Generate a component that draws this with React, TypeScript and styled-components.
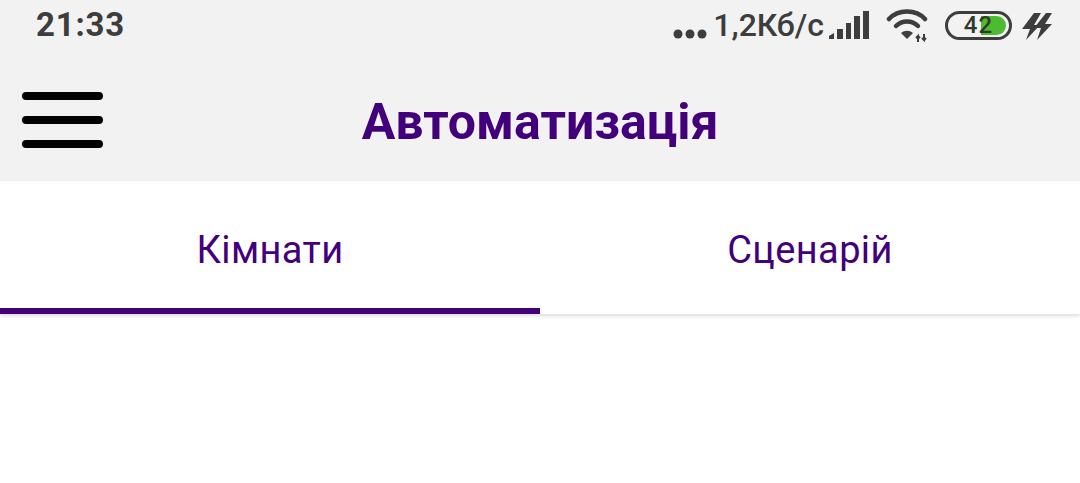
import React from "react";
import styled, { createGlobalStyle } from "styled-components";

const GlobalStyle = createGlobalStyle`
  html, body {
    margin: 0;
    padding: 0;
    background: #ffffff;
    font-family: Roboto, "Liberation Sans", sans-serif;
  }
`;

const Page = styled.div`
  width: 1080px;
  height: 483px;
  overflow: hidden;
  background: #ffffff;
`;

const Header = styled.header`
  height: 181px;
  background: #f2f2f2;
  display: flex;
  flex-direction: column;
`;

const StatusBar = styled.div`
  height: 50px;
  display: flex;
  align-items: center;
  justify-content: space-between;
  padding: 0 28px 0 36px;
  color: #3d3d3d;
`;

const Time = styled.span`
  font-size: 33px;
  font-weight: 700;
  letter-spacing: 0.8px;
  line-height: 50px;
`;

const StatusIcons = styled.div`
  display: flex;
  align-items: center;
`;

const Speed = styled.span`
  font-size: 32px;
  font-weight: 500;
  line-height: 50px;
  margin: 0 5px 0 6px;
`;

const Battery = styled.div`
  position: relative;
  width: 67px;
  height: 29px;
  margin: 0 10px 0 15px;
  box-sizing: border-box;
  border: 3px solid #3d3d3d;
  border-radius: 15px;
  display: flex;
  align-items: center;
  justify-content: center;
  overflow: hidden;
`;

const BatteryFill = styled.div`
  position: absolute;
  top: 2px;
  bottom: 2px;
  right: 3px;
  width: 25px;
  background: #4dbb30;
  border-radius: 0 10px 10px 0;
`;

const BatteryLabel = styled.span`
  position: relative;
  font-size: 24px;
  font-weight: 500;
  line-height: 22px;
  letter-spacing: 1px;
  color: #2f3a2c;
`;

const Toolbar = styled.div`
  flex: 1;
  position: relative;
  display: flex;
  align-items: center;
  justify-content: center;
  padding-top: 13px;
`;

const Menu = styled.button`
  position: absolute;
  left: 22px;
  top: 42px;
  width: 81px;
  padding: 0;
  border: 0;
  background: transparent;
  display: flex;
  flex-direction: column;
  gap: 16px;
`;

const MenuLine = styled.span`
  display: block;
  height: 8px;
  border-radius: 4px;
  background: #000000;
`;

const Title = styled.h1`
  margin: 0;
  font-size: 50px;
  font-weight: 700;
  line-height: 60px;
  color: #42007a;
`;

const Tabs = styled.nav`
  height: 133px;
  display: grid;
  grid-template-columns: 1fr 1fr;
  box-shadow: 0 2px 4px rgba(0, 0, 0, 0.14);
  background: #ffffff;
`;

const Tab = styled.div<{ $active?: boolean }>`
  display: flex;
  align-items: center;
  justify-content: center;
  box-sizing: border-box;
  padding-top: 11px;
  font-size: 38px;
  letter-spacing: 0.4px;
  color: #42007a;
  border-bottom: 6px solid ${(props) => (props.$active ? "#42007a" : "transparent")};
`;

const Dots = () => (
  <svg width="34" height="12" viewBox="0 0 34 12" style={{ marginTop: 18 }}>
    <circle cx="5" cy="6" r="4.5" fill="#3d3d3d" />
    <circle cx="17" cy="6" r="4.5" fill="#3d3d3d" />
    <circle cx="29" cy="6" r="4.5" fill="#3d3d3d" />
  </svg>
);

const Signal = () => (
  <svg width="41" height="30" viewBox="0 0 41 30">
    <path d="M0 29v-3l5-3v6z" fill="#3d3d3d" />
    <rect x="8" y="19" width="6" height="10" fill="#3d3d3d" />
    <rect x="17" y="13" width="5" height="16" fill="#3d3d3d" />
    <rect x="25" y="6" width="6" height="23" fill="#3d3d3d" />
    <rect x="34" y="1" width="6" height="28" fill="#3d3d3d" />
  </svg>
);

const Wifi = () => (
  <svg width="44" height="34" viewBox="0 0 44 34" style={{ marginLeft: 16 }}>
    <g fill="none" stroke="#3d3d3d" strokeWidth="4.5" strokeLinecap="round">
      <path d="M3 11C12 1 30 1 39 11" />
      <path d="M10 18c6-6 16-6 22 0" />
    </g>
    <path d="M15 25c4-3 8-3 12 0l-6 6z" fill="#3d3d3d" />
    <path
      d="M32 34v-6l-2 2M32 28l2 2M38 26v6l-2-2M38 32l2-2"
      fill="none"
      stroke="#3d3d3d"
      strokeWidth="2"
    />
  </svg>
);

const Bolts = () => (
  <svg width="30" height="30" viewBox="0 0 30 30">
    <path d="M12 3L0 19h8L4 30l14-15h-6l7-12z" fill="#3d3d3d" />
    <path d="M24 3L12 18h7l-4 12 15-16h-7l7-11z" fill="#3d3d3d" />
  </svg>
);

export default function App() {
  return (
    <Page>
      <GlobalStyle />
      <Header>
        <StatusBar>
          <Time>21:33</Time>
          <StatusIcons>
            <Dots />
            <Speed>1,2Кб/с</Speed>
            <Signal />
            <Wifi />
            <Battery>
              <BatteryFill />
              <BatteryLabel>42</BatteryLabel>
            </Battery>
            <Bolts />
          </StatusIcons>
        </StatusBar>
        <Toolbar>
          <Menu aria-label="Меню">
            <MenuLine />
            <MenuLine />
            <MenuLine />
          </Menu>
          <Title>Автоматизація</Title>
        </Toolbar>
      </Header>
      <Tabs>
        <Tab $active>Кімнати</Tab>
        <Tab>Сценарій</Tab>
      </Tabs>
    </Page>
  );
}
